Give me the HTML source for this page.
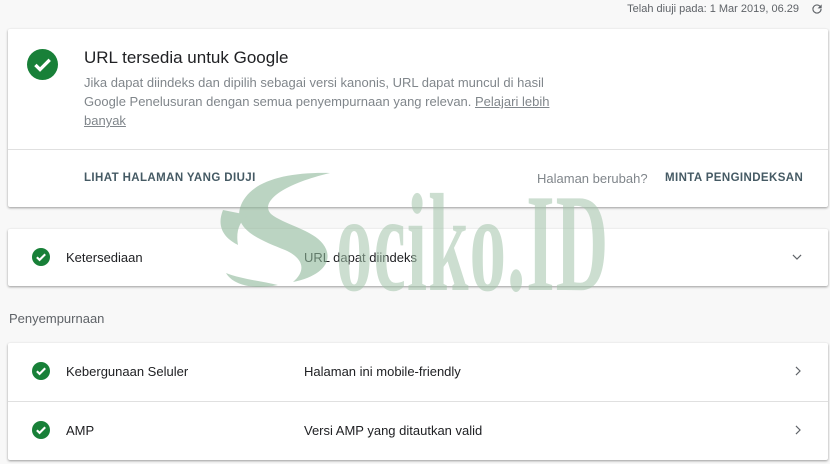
<!DOCTYPE html>
<html><head><meta charset="utf-8"><style>
body{margin:0;width:830px;height:464px;background:#f8f8f8;font-family:"Liberation Sans",Arial,sans-serif;position:relative;overflow:hidden}
.card{position:absolute;left:8px;width:820px;background:#fff;box-shadow:0 1px 2px rgba(0,0,0,.3),0 1px 3px rgba(0,0,0,.1);border-radius:2px}
.abs{position:absolute}
.row{position:absolute;left:0;right:0;height:58px}
.row .t{position:absolute;top:21px;font-size:13px;color:#202124}
</style></head><body>
<div class="abs" style="right:31px;top:3px;font-size:11px;color:#5f6368">Telah diuji pada: 1 Mar 2019, 06.29</div>
<svg class="abs" style="left:810px;top:2px" width="14" height="14" viewBox="0 0 24 24"><path fill="#5f6368" d="M17.65 6.35A7.96 7.96 0 0012 4a8 8 0 108 8h-2a6 6 0 11-1.76-4.24L13 11h7V4l-2.35 2.35z"/></svg>

<div class="card" style="top:29px;height:178px">
 <svg class="abs" style="left:19px;top:20px" width="31" height="31" viewBox="0 0 24 24"><circle cx="12" cy="12" r="12" fill="#188038"/><path d="M6.5 12.3l3.6 3.6 7.5-7.5" stroke="#fff" stroke-width="2.6" fill="none"/></svg>
 <div class="abs" style="left:76px;top:19px;font-size:17px;color:#202124">URL tersedia untuk Google</div>
 <div class="abs" style="left:76px;top:44px;width:490px;font-size:13px;line-height:19px;color:#80868b">Jika dapat diindeks dan dipilih sebagai versi kanonis, URL dapat muncul di hasil Google Penelusuran dengan semua penyempurnaan yang relevan. <u>Pelajari lebih banyak</u></div>
 <div class="abs" style="left:0;right:0;top:120px;border-top:1px solid #e0e0e0"></div>
 <div class="abs" style="left:76px;top:143px;font-size:11.5px;font-weight:bold;color:#455a64;letter-spacing:.4px">LIHAT HALAMAN YANG DIUJI</div>
 <div class="abs" style="left:529px;top:142px;font-size:13px;color:#80868b">Halaman berubah?</div>
 <div class="abs" style="left:657px;top:143px;font-size:11.5px;font-weight:bold;color:#455a64;letter-spacing:.4px">MINTA PENGINDEKSAN</div>
</div>

<div class="card" style="top:229px;height:57px">
 <div class="row">
  <svg class="abs" style="left:24px;top:19px" width="18" height="18" viewBox="0 0 24 24"><circle cx="12" cy="12" r="12" fill="#188038"/><path d="M6.5 12.3l3.6 3.6 7.5-7.5" stroke="#fff" stroke-width="2.8" fill="none"/></svg>
  <div class="t" style="left:58px">Ketersediaan</div>
  <div class="t" style="left:296px">URL dapat diindeks</div>
  <svg class="abs" style="left:782px;top:21px" width="14" height="14" viewBox="0 0 24 24"><path d="M5 8.5l7 7 7-7" stroke="#5f6368" stroke-width="2" fill="none"/></svg>
 </div>
</div>

<div class="abs" style="left:9px;top:311px;font-size:13px;color:#5f6368">Penyempurnaan</div>

<div class="card" style="top:343px;height:117px">
 <div class="row" style="top:0">
  <svg class="abs" style="left:24px;top:19px" width="18" height="18" viewBox="0 0 24 24"><circle cx="12" cy="12" r="12" fill="#188038"/><path d="M6.5 12.3l3.6 3.6 7.5-7.5" stroke="#fff" stroke-width="2.8" fill="none"/></svg>
  <div class="t" style="left:58px">Kebergunaan Seluler</div>
  <div class="t" style="left:296px">Halaman ini mobile-friendly</div>
  <svg class="abs" style="left:783px;top:21px" width="14" height="14" viewBox="0 0 24 24"><path d="M8.5 5l7 7-7 7" stroke="#5f6368" stroke-width="2" fill="none"/></svg>
 </div>
 <div class="abs" style="left:0;right:0;top:58px;border-top:1px solid #e0e0e0"></div>
 <div class="row" style="top:59px">
  <svg class="abs" style="left:24px;top:19px" width="18" height="18" viewBox="0 0 24 24"><circle cx="12" cy="12" r="12" fill="#188038"/><path d="M6.5 12.3l3.6 3.6 7.5-7.5" stroke="#fff" stroke-width="2.8" fill="none"/></svg>
  <div class="t" style="left:58px">AMP</div>
  <div class="t" style="left:296px">Versi AMP yang ditautkan valid</div>
  <svg class="abs" style="left:783px;top:21px" width="14" height="14" viewBox="0 0 24 24"><path d="M8.5 5l7 7-7 7" stroke="#5f6368" stroke-width="2" fill="none"/></svg>
 </div>
</div>

<!-- watermark -->
<svg class="abs" style="left:218px;top:170px;opacity:.6" width="120" height="125" viewBox="0 0 120 125"><path d="M112 3C65 2 30 12 22 38c-6 22 20 32 45 42 18 8 22 20 8 32 30-6 42-22 30-38-10-14-40-20-52-30-10-10 5-28 59-41z" fill="#8fb89a"/><path d="M5 40c-8 20 5 30 15 35-2-12 0-22 10-30z" fill="#8fb89a"/><path d="M60 115c-25 5-45 0-52-12 15 6 35 8 52 12z" fill="#8fb89a"/></svg>
<div class="abs" style="left:336px;top:174px;font-family:'Liberation Serif',serif;font-weight:bold;font-size:140px;line-height:140px;color:#a3c4ab;opacity:.55;transform:scaleX(.52);transform-origin:0 0;letter-spacing:2px">ociko.ID</div>
</body></html>
